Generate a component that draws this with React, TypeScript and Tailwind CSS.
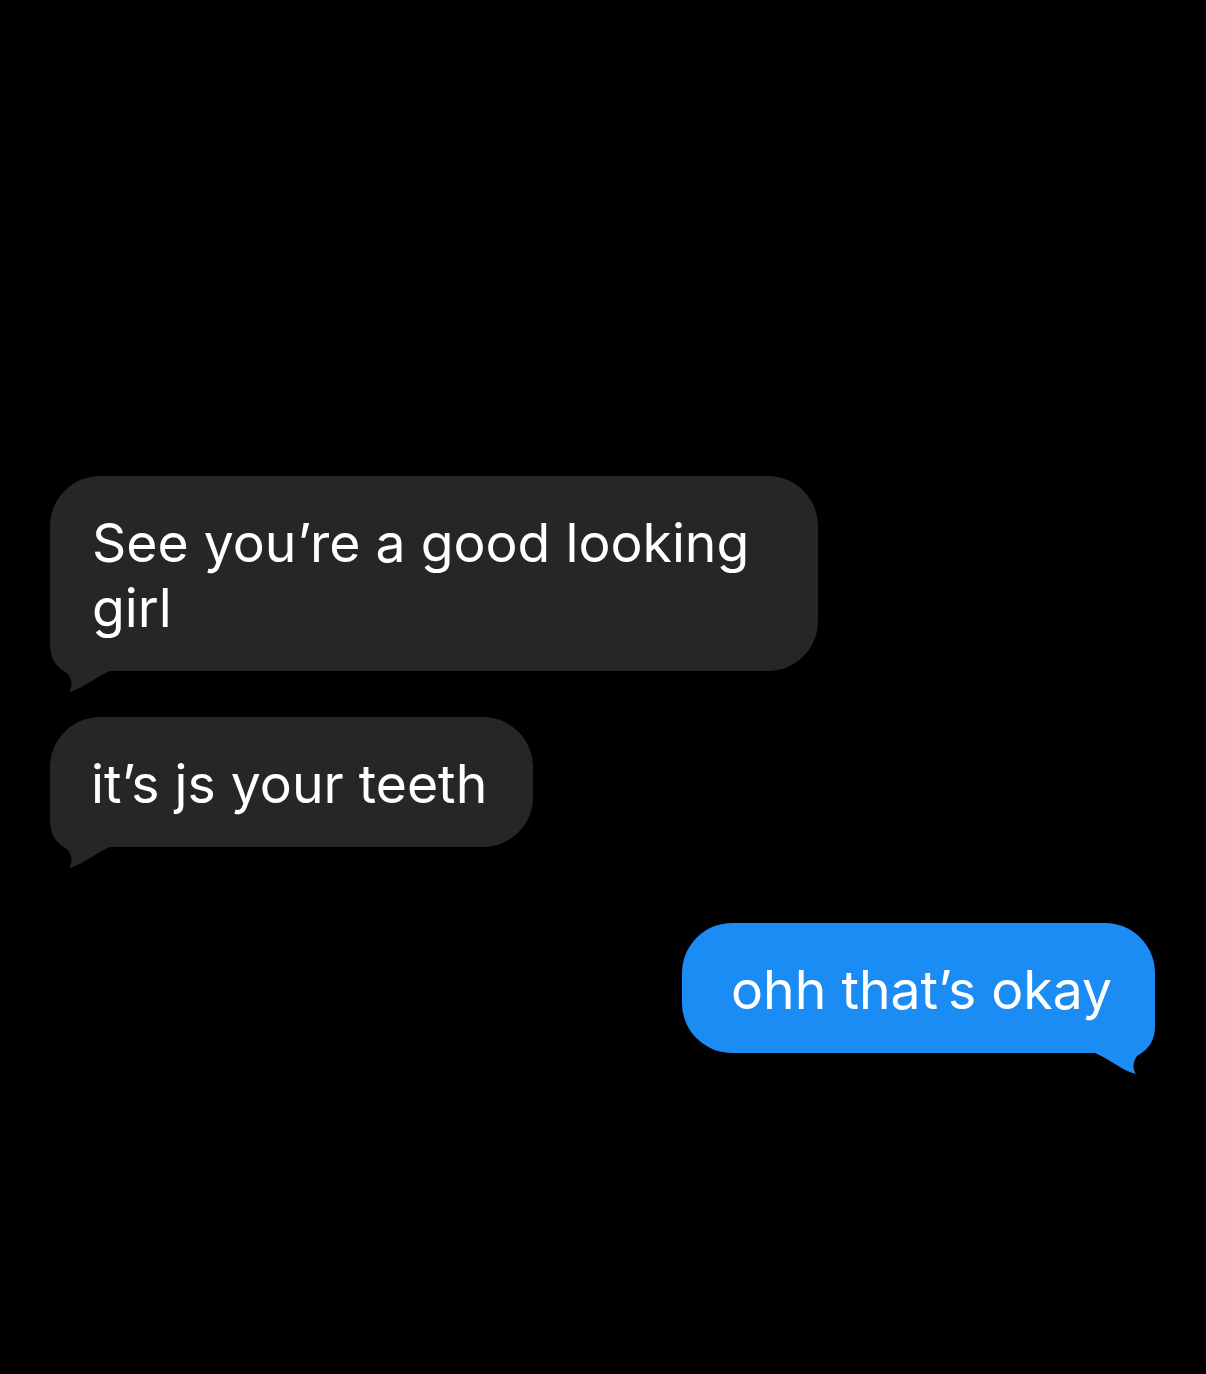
import React from "react";

type Side = "left" | "right";

function Tail({ side, color }: { side: Side; color: string }) {
  return (
    <svg
      width="70"
      height="72"
      viewBox="0 0 70 72"
      className={
        side === "left"
          ? "absolute left-0 bottom-[-22px]"
          : "absolute right-0 bottom-[-22px] -scale-x-100"
      }
      aria-hidden
    >
      <path
        d="M0 0 L0 22 C0 38 6 46 18 53 C22 59 23 65 19 71 C32 68 44 57 60 50 L70 50 L70 0 Z"
        fill={color}
      />
    </svg>
  );
}

function Bubble({
  side,
  children,
  className = "",
}: {
  side: Side;
  children: React.ReactNode;
  className?: string;
}) {
  const gray = side === "left";
  return (
    <div
      className={
        "relative rounded-[50px] pt-[34px] pb-[31px] text-[53.5px] leading-[65px] text-white " +
        (gray ? "self-start bg-[#262628] " : "self-end bg-[#1c8cf5] ") +
        className
      }
    >
      <p className="relative z-10">{children}</p>
      <Tail side={side} color={gray ? "#262628" : "#1c8cf5"} />
    </div>
  );
}

export default function App() {
  return (
    <div
      className="flex min-h-[1374px] w-full flex-col bg-black pl-[50px] pr-[51px] pt-[476px]"
      style={{ fontFamily: "Inter, 'Liberation Sans', sans-serif" }}
    >
      <Bubble side="left" className="w-[768px] pl-[42px] pr-[42px]">
        See you’re a good looking girl
      </Bubble>
      <Bubble side="left" className="mt-[46px] pl-[41px] pr-[46px]">
        it’s js your teeth
      </Bubble>
      <Bubble side="right" className="mt-[76px] pl-[49px] pr-[43px]">
        ohh that’s okay
      </Bubble>
    </div>
  );
}
